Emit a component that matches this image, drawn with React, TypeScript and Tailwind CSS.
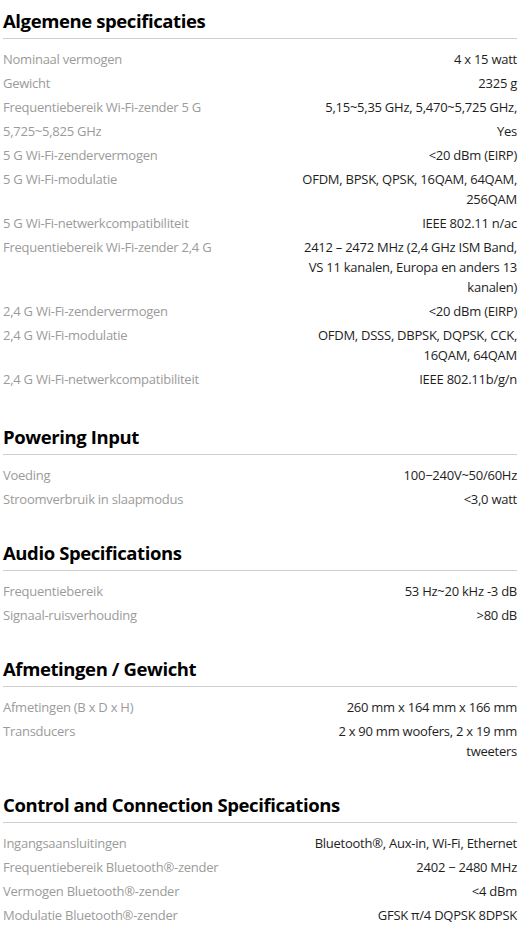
import React from "react";

type Row = { label: string; value: string[] };
type Section = { title: string; rows: Row[] };

const sections: Section[] = [
  {
    title: "Algemene specificaties",
    rows: [
      { label: "Nominaal vermogen", value: ["4 x 15 watt"] },
      { label: "Gewicht", value: ["2325 g"] },
      { label: "Frequentiebereik Wi-Fi-zender 5 G", value: ["5,15~5,35 GHz, 5,470~5,725 GHz,"] },
      { label: "5,725~5,825 GHz", value: ["Yes"] },
      { label: "5 G Wi-Fi-zendervermogen", value: ["<20 dBm (EIRP)"] },
      { label: "5 G Wi-Fi-modulatie", value: ["OFDM, BPSK, QPSK, 16QAM, 64QAM,", "256QAM"] },
      { label: "5 G Wi-Fi-netwerkcompatibiliteit", value: ["IEEE 802.11 n/ac"] },
      {
        label: "Frequentiebereik Wi-Fi-zender 2,4 G",
        value: ["2412 – 2472 MHz (2,4 GHz ISM Band,", "VS 11 kanalen, Europa en anders 13", "kanalen)"],
      },
      { label: "2,4 G Wi-Fi-zendervermogen", value: ["<20 dBm (EIRP)"] },
      { label: "2,4 G Wi-Fi-modulatie", value: ["OFDM, DSSS, DBPSK, DQPSK, CCK,", "16QAM, 64QAM"] },
      { label: "2,4 G Wi-Fi-netwerkcompatibiliteit", value: ["IEEE 802.11b/g/n"] },
    ],
  },
  {
    title: "Powering Input",
    rows: [
      { label: "Voeding", value: ["100−240V~50/60Hz"] },
      { label: "Stroomverbruik in slaapmodus", value: ["<3,0 watt"] },
    ],
  },
  {
    title: "Audio Specifications",
    rows: [
      { label: "Frequentiebereik", value: ["53 Hz~20 kHz -3 dB"] },
      { label: "Signaal-ruisverhouding", value: [">80 dB"] },
    ],
  },
  {
    title: "Afmetingen / Gewicht",
    rows: [
      { label: "Afmetingen (B x D x H)", value: ["260 mm x 164 mm x 166 mm"] },
      { label: "Transducers", value: ["2 x 90 mm woofers, 2 x 19 mm", "tweeters"] },
    ],
  },
  {
    title: "Control and Connection Specifications",
    rows: [
      { label: "Ingangsaansluitingen", value: ["Bluetooth®, Aux-in, Wi-Fi, Ethernet"] },
      { label: "Frequentiebereik Bluetooth®-zender", value: ["2402 − 2480 MHz"] },
      { label: "Vermogen Bluetooth®-zender", value: ["<4 dBm"] },
      { label: "Modulatie Bluetooth®-zender", value: ["GFSK π/4 DQPSK 8DPSK"] },
    ],
  },
];

export default function App() {
  return (
    <div
      className="w-[525px] bg-white pl-[3px] pr-[8px] pt-[9px]"
      style={{ fontFamily: '"Open Sans", "Noto Sans", sans-serif' }}
    >
      <div className="flex flex-col">
        {sections.map((s, idx) => (
          <section key={s.title} className={idx === 0 ? "" : idx === 1 ? "mt-[34px]" : "mt-[30px]"}>
            <h2 className="border-b border-[#cfcfcf] pb-[5px] text-[18.5px] leading-[24px] font-bold text-black tracking-[-0.4px]">
              {s.title}
            </h2>
            <div className="mt-[8px] flex flex-col">
              {s.rows.map((r, i) => (
                <div key={i} className="flex justify-between gap-4 py-[2px] text-[13px] leading-[20px] tracking-[-0.25px]">
                  <div className="text-[#9b9b9b] whitespace-nowrap">{r.label}</div>
                  <div className="text-right text-[#1e1e1e]">
                    {r.value.map((v, j) => (
                      <div key={j} className="whitespace-nowrap">
                        {v}
                      </div>
                    ))}
                  </div>
                </div>
              ))}
            </div>
          </section>
        ))}
      </div>
    </div>
  );
}
